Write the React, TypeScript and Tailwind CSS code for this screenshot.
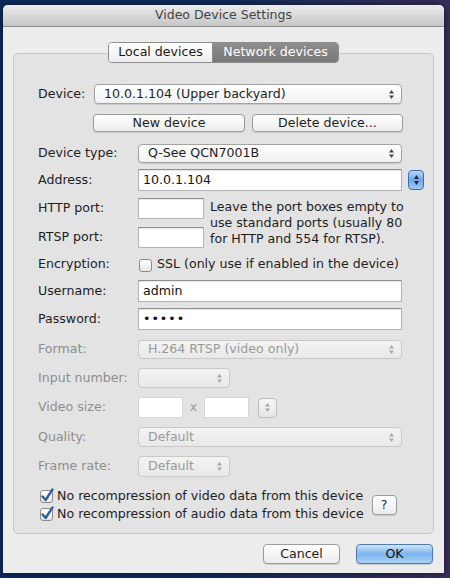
import React from "react";

const font = "font-['DejaVu_Sans','Liberation_Sans',sans-serif]";

function Arrows({ dim = false }: { dim?: boolean }) {
  const c = dim ? "#a9a9a9" : "#4a4a4a";
  return (
    <svg width="7" height="11" viewBox="0 0 7 11" className="shrink-0">
      <path d="M3.5 1 L6 4.5 L1 4.5 Z" fill={c} />
      <path d="M3.5 10 L6 6.5 L1 6.5 Z" fill={c} />
    </svg>
  );
}

function Popup({
  text,
  className = "",
  disabled = false,
}: {
  text: string;
  className?: string;
  disabled?: boolean;
}) {
  return (
    <div
      className={`flex items-center justify-between rounded-[4px] border pl-[9px] pr-[6px] ${
        disabled
          ? "border-[#c9c9c9] bg-gradient-to-b from-[#f3f3f3] to-[#e9e9e9] text-[#9a9a9a]"
          : "border-[#a3a3a3] bg-gradient-to-b from-white to-[#f1f1f1] text-[#1e1e1e] shadow-[0_1px_1px_rgba(0,0,0,0.12)]"
      } ${className}`}
    >
      <span className="leading-none">{text}</span>
      <Arrows dim={disabled} />
    </div>
  );
}

function Field({ value = "", className = "" }: { value?: string; className?: string }) {
  return (
    <div
      className={`flex items-center border border-[#b3b3b3] border-t-[#8f8f8f] bg-white pl-[4px] text-[#111] shadow-[inset_0_1px_1px_rgba(0,0,0,0.1)] ${className}`}
    >
      {value}
    </div>
  );
}

function Button({ label, className = "" }: { label: string; className?: string }) {
  return (
    <div
      className={`flex items-center justify-center rounded-[4px] border border-[#9c9c9c] bg-gradient-to-b from-white to-[#ececec] text-[#1e1e1e] shadow-[0_1px_1px_rgba(0,0,0,0.12)] ${className}`}
    >
      {label}
    </div>
  );
}

function CheckBox({ checked }: { checked: boolean }) {
  return (
    <svg width="16" height="16" viewBox="0 0 16 16" className="shrink-0">
      <defs>
        <linearGradient id="cbg" x1="0" y1="0" x2="0" y2="1">
          <stop offset="0" stopColor="#ffffff" />
          <stop offset="1" stopColor="#e6e6e6" />
        </linearGradient>
      </defs>
      <rect x="1.5" y="2.5" width="12" height="12" rx="2.5" fill="url(#cbg)" stroke="#8c8c8c" />
      {checked && (
        <path
          d="M3.6 8.4 L6.6 12 L13.4 1.6"
          fill="none"
          stroke="#2f5f9e"
          strokeWidth="2.4"
          strokeLinecap="round"
          strokeLinejoin="round"
        />
      )}
    </svg>
  );
}

function Label({ text, dim = false, w = "w-[100px]" }: { text: string; dim?: boolean; w?: string }) {
  return <div className={`${w} shrink-0 ${dim ? "text-[#8e8e8e]" : "text-[#1e1e1e]"}`}>{text}</div>;
}

export default function App() {
  return (
    <div
      className={`w-[450px] h-[578px] overflow-hidden pt-[5px] pl-[3px] text-[12.6px] ${font} bg-gradient-to-r from-[#0d2c5e] via-[#0f2d5c] to-[#3a2f5e]`}
    >
      <div className="w-[441px] h-[568px] rounded-t-[5px] bg-[#ececec] flex flex-col overflow-hidden shadow-[0_0_8px_rgba(0,0,0,0.6)]">
        <div className="h-[22px] shrink-0 flex items-center justify-center border-b border-[#8e8e8e] bg-gradient-to-b from-[#ececec] to-[#c6c6c6] text-[#444] text-[12.5px]">
          Video Device Settings
        </div>

        <div className="px-[10px] flex flex-col">
          <div className="relative z-10 mt-[15px] self-center flex h-[21px] rounded-[4px] border border-[#8d8d8d] overflow-hidden text-[12.6px]">
            <div className="w-[104px] flex items-center justify-center bg-gradient-to-b from-white to-[#eeeeee] text-[#1a1a1a] border-r border-[#8d8d8d]">
              Local devices
            </div>
            <div className="w-[125px] flex items-center justify-center bg-gradient-to-b from-[#8e8e8e] to-[#777777] text-white">
              Network devices
            </div>
          </div>

          <div className="-mt-[10px] h-[481px] rounded-[5px] border border-[#c6c6c6] bg-[#e3e3e3] pl-[24px] pt-[30px] flex flex-col">
            <div className="flex items-center h-[20px]">
              <Label text="Device:" w="w-[56px]" />
              <Popup text="10.0.1.104 (Upper backyard)" className="w-[308px] h-[20px]" />
            </div>

            <div className="flex mt-[10px] h-[18px] ml-[55px] gap-[7px]">
              <Button label="New device" className="w-[152px] h-[18px]" />
              <Button label="Delete device..." className="w-[151px] h-[18px]" />
            </div>

            <div className="flex items-center mt-[12px] h-[19px]">
              <Label text="Device type:" />
              <Popup text="Q-See QCN7001B" className="w-[264px] h-[19px]" />
            </div>

            <div className="flex items-center mt-[6px] h-[22px]">
              <Label text="Address:" />
              <Field value="10.0.1.104" className="w-[264px] h-[22px]" />
              <div className="ml-[6px] w-[16px] h-[20px] rounded-[4px] border border-[#3f6eae] bg-gradient-to-b from-[#b9d8f8] via-[#6ea7e6] to-[#9fc9f3] flex flex-col items-center justify-center gap-[2px]">
                <svg width="7" height="12" viewBox="0 0 7 12">
                  <path d="M3.5 1 L6 5 L1 5 Z" fill="#1b2c4a" />
                  <path d="M3.5 11 L6 7 L1 7 Z" fill="#1b2c4a" />
                </svg>
              </div>
            </div>

            <div className="flex mt-[7px]">
              <div className="flex flex-col">
                <div className="flex items-center h-[21px]">
                  <Label text="HTTP port:" />
                  <Field className="w-[66px] h-[21px]" />
                </div>
                <div className="flex items-center h-[21px] mt-[8px]">
                  <Label text="RTSP port:" />
                  <Field className="w-[66px] h-[21px]" />
                </div>
              </div>
              <div className="ml-[6px] leading-[16px] text-[#1e1e1e] pt-[1px] whitespace-nowrap">
                Leave the port boxes empty to
                <br />
                use standard ports (usually 80
                <br />
                for HTTP and 554 for RTSP).
              </div>
            </div>

            <div className="flex items-center mt-[8px] h-[17px]">
              <Label text="Encryption:" />
              <CheckBox checked={false} />
              <span className="ml-[3px] text-[#1e1e1e]">SSL (only use if enabled in the device)</span>
            </div>

            <div className="flex items-center mt-[7px] h-[22px]">
              <Label text="Username:" />
              <Field value="admin" className="w-[264px] h-[22px]" />
            </div>

            <div className="flex items-center mt-[6px] h-[22px]">
              <Label text="Password:" />
              <Field value="•••••" className="w-[264px] h-[22px] tracking-[1px]" />
            </div>

            <div className="flex items-center mt-[10px] h-[19px]">
              <Label text="Format:" dim />
              <Popup text="H.264 RTSP (video only)" disabled className="w-[264px] h-[19px]" />
            </div>

            <div className="flex items-center mt-[9px] h-[20px]">
              <Label text="Input number:" dim />
              <Popup text="" disabled className="w-[92px] h-[20px]" />
            </div>

            <div className="flex items-center mt-[9px] h-[21px]">
              <Label text="Video size:" dim />
              <div className="w-[45px] h-[21px] bg-white border border-[#d6d6d6]" />
              <span className="w-[21px] text-center text-[#9a9a9a]">x</span>
              <div className="w-[45px] h-[21px] bg-white border border-[#d6d6d6]" />
              <div className="ml-[9px] w-[19px] h-[20px] rounded-[4px] border border-[#bdbdbd] bg-gradient-to-b from-[#f6f6f6] to-[#e6e6e6] flex items-center justify-center">
                <Arrows dim />
              </div>
            </div>

            <div className="flex items-center mt-[9px] h-[20px]">
              <Label text="Quality:" dim />
              <Popup text="Default" disabled className="w-[264px] h-[20px]" />
            </div>

            <div className="flex items-center mt-[9px] h-[21px]">
              <Label text="Frame rate:" dim />
              <Popup text="Default" disabled className="w-[92px] h-[21px]" />
            </div>

            <div className="flex items-center mt-[10px]">
              <div className="flex flex-col ml-[1px] text-[#1e1e1e]">
                <div className="flex items-center h-[18px]">
                  <CheckBox checked />
                  <span className="ml-[2px] whitespace-nowrap">No recompression of video data from this device</span>
                </div>
                <div className="flex items-center h-[18px]">
                  <CheckBox checked />
                  <span className="ml-[2px] whitespace-nowrap">No recompression of audio data from this device</span>
                </div>
              </div>
              <Button label="?" className="ml-[8px] w-[25px] h-[20px]" />
            </div>
          </div>

          <div className="flex justify-end gap-[16px] mt-[10px] pr-[1px]">
            <Button label="Cancel" className="w-[77px] h-[20px]" />
            <div className="w-[77px] h-[20px] rounded-[4px] border border-[#4f79b3] bg-gradient-to-b from-[#cfe4fb] via-[#7db4ee] to-[#a9d0f7] flex items-center justify-center text-[#111] shadow-[0_1px_1px_rgba(0,0,0,0.15)]">
              OK
            </div>
          </div>
        </div>
      </div>
    </div>
  );
}
